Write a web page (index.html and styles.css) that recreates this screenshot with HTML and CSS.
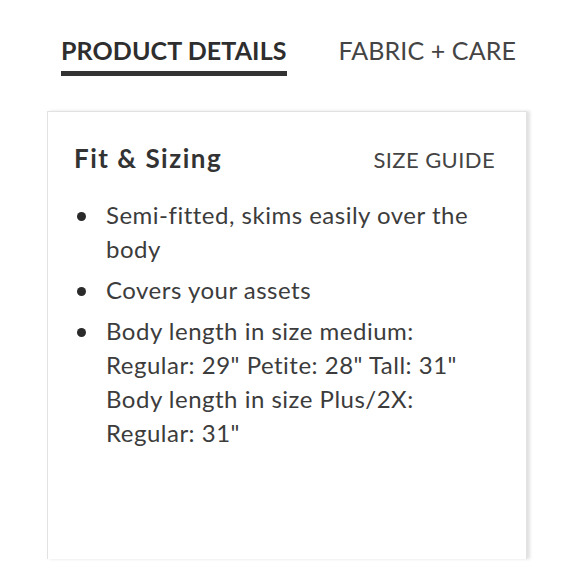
FILE: index.html
```html
<!DOCTYPE html>
<html>
<head>
<meta charset="utf-8">
<link rel="stylesheet" href="styles.css">
</head>
<body>
<div class="page">
  <div class="tabs">
    <div class="tab active">PRODUCT DETAILS</div>
    <div class="tab">FABRIC + CARE</div>
  </div>
  <div class="card">
    <div class="card-head">
      <div class="title">Fit &amp; Sizing</div>
      <div class="guide">SIZE GUIDE</div>
    </div>
    <ul class="list">
      <li>Semi-fitted, skims easily over the body</li>
      <li>Covers your assets</li>
      <li>Body length in size medium:<br>Regular: 29" Petite: 28" Tall: 31"<br>Body length in size Plus/2X:<br>Regular: 31"</li>
    </ul>
  </div>
</div>
</body>
</html>
```
FILE: styles.css
```css
html, body {
  margin: 0;
  padding: 0;
  background: #fff;
}
body {
  font-family: Lato, "Noto Sans", sans-serif;
  color: #333;
  width: 580px;
  height: 580px;
  overflow: hidden;
}
.page {
  padding-top: 35px;
}
.tabs {
  display: flex;
  gap: 52px;
  padding-left: 61px;
}
.tab {
  font-size: 25px;
  line-height: 30px;
  letter-spacing: 0.1px;
  color: #444;
}
.tab.active {
  font-weight: 700;
  color: #2e2e2e;
  padding-bottom: 6px;
  border-bottom: 5px solid #333;
}
.card {
  margin-top: 35px;
  margin-left: 47px;
  width: 480px;
  height: 448px;
  box-sizing: border-box;
  border: 1px solid #e2e2e2;
  border-bottom: none;
  box-shadow: 3px 0 3px rgba(0,0,0,0.12);
  padding: 30px 31px 0 26px;
}
.card-head {
  display: flex;
  justify-content: space-between;
  align-items: baseline;
}
.title {
  font-size: 26px;
  font-weight: 700;
  letter-spacing: 1.5px;
  color: #333;
}
.guide {
  font-size: 22px;
  letter-spacing: 0.4px;
  color: #444;
}
.list {
  list-style: none;
  margin: 24px 0 0 0;
  padding: 0 0 0 32px;
  font-size: 24px;
  line-height: 34px;
  letter-spacing: 0.5px;
  color: #3c3c3c;
}
.list li {
  position: relative;
  margin-bottom: 7px;
}
.list li::before {
  content: "";
  position: absolute;
  left: -29px;
  top: 14px;
  width: 9px;
  height: 9px;
  border-radius: 50%;
  background: #2a2a2a;
}
```
